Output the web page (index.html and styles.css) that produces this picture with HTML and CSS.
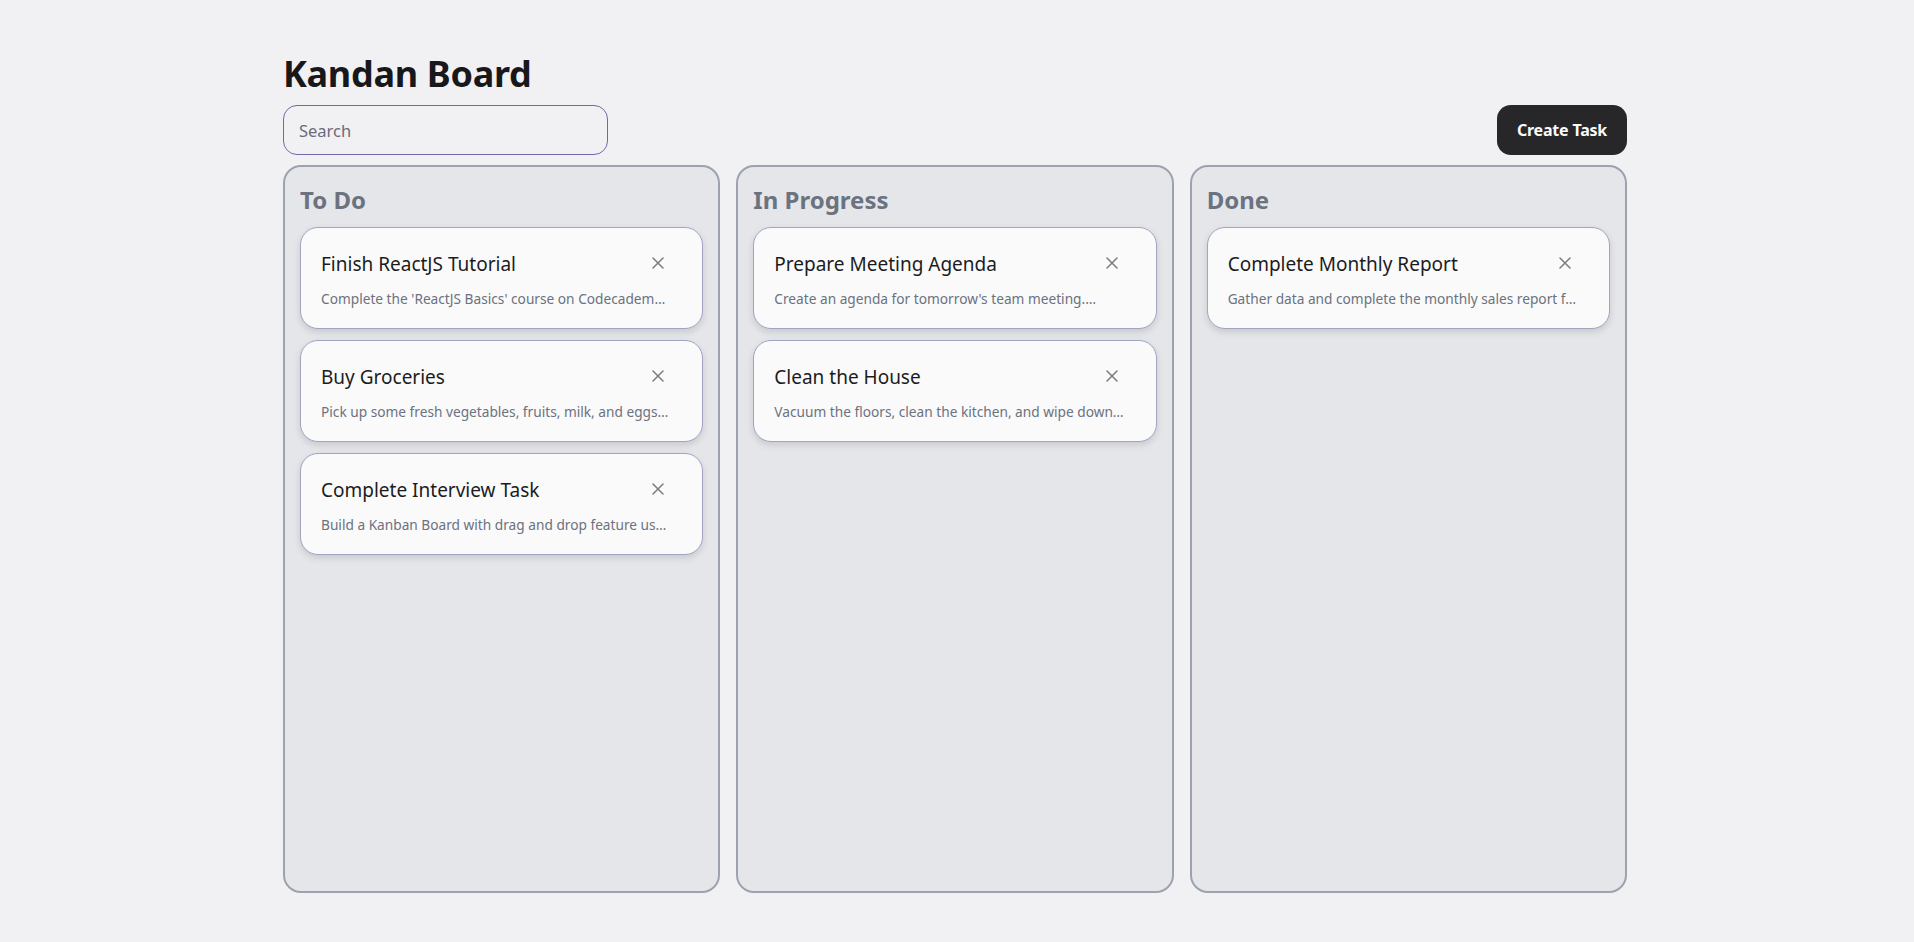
FILE: index.html
```html
<!DOCTYPE html>
<html lang="en">
<head>
<meta charset="utf-8">
<title>Kandan Board</title>
<link rel="stylesheet" href="styles.css">
</head>
<body>
<main class="page">
  <h1 class="page-title">Kandan Board</h1>
  <div class="toolbar">
    <input class="search" type="text" placeholder="Search">
    <button class="create-btn" type="button">Create Task</button>
  </div>
  <section class="board">
    <div class="column">
      <h2 class="column-title">To Do</h2>
      <div class="card-list">
        <article class="card">
          <div class="card-head">
            <h3 class="card-title">Finish ReactJS Tutorial</h3>
            <button class="close-btn" type="button" aria-label="Delete"><svg viewBox="0 0 12 12" width="12" height="12"><path d="M1 1L11 11M11 1L1 11" stroke="currentColor" stroke-width="1.5" stroke-linecap="round" fill="none"/></svg></button>
          </div>
          <p class="card-desc">Complete the 'ReactJS Basics' course on Codecadem…</p>
        </article>
        <article class="card">
          <div class="card-head">
            <h3 class="card-title">Buy Groceries</h3>
            <button class="close-btn" type="button" aria-label="Delete"><svg viewBox="0 0 12 12" width="12" height="12"><path d="M1 1L11 11M11 1L1 11" stroke="currentColor" stroke-width="1.5" stroke-linecap="round" fill="none"/></svg></button>
          </div>
          <p class="card-desc">Pick up some fresh vegetables, fruits, milk, and eggs…</p>
        </article>
        <article class="card">
          <div class="card-head">
            <h3 class="card-title">Complete Interview Task</h3>
            <button class="close-btn" type="button" aria-label="Delete"><svg viewBox="0 0 12 12" width="12" height="12"><path d="M1 1L11 11M11 1L1 11" stroke="currentColor" stroke-width="1.5" stroke-linecap="round" fill="none"/></svg></button>
          </div>
          <p class="card-desc">Build a Kanban Board with drag and drop feature us…</p>
        </article>
      </div>
    </div>
    <div class="column">
      <h2 class="column-title">In Progress</h2>
      <div class="card-list">
        <article class="card">
          <div class="card-head">
            <h3 class="card-title">Prepare Meeting Agenda</h3>
            <button class="close-btn" type="button" aria-label="Delete"><svg viewBox="0 0 12 12" width="12" height="12"><path d="M1 1L11 11M11 1L1 11" stroke="currentColor" stroke-width="1.5" stroke-linecap="round" fill="none"/></svg></button>
          </div>
          <p class="card-desc">Create an agenda for tomorrow's team meeting.…</p>
        </article>
        <article class="card">
          <div class="card-head">
            <h3 class="card-title">Clean the House</h3>
            <button class="close-btn" type="button" aria-label="Delete"><svg viewBox="0 0 12 12" width="12" height="12"><path d="M1 1L11 11M11 1L1 11" stroke="currentColor" stroke-width="1.5" stroke-linecap="round" fill="none"/></svg></button>
          </div>
          <p class="card-desc">Vacuum the floors, clean the kitchen, and wipe down…</p>
        </article>
      </div>
    </div>
    <div class="column">
      <h2 class="column-title">Done</h2>
      <div class="card-list">
        <article class="card">
          <div class="card-head">
            <h3 class="card-title">Complete Monthly Report</h3>
            <button class="close-btn" type="button" aria-label="Delete"><svg viewBox="0 0 12 12" width="12" height="12"><path d="M1 1L11 11M11 1L1 11" stroke="currentColor" stroke-width="1.5" stroke-linecap="round" fill="none"/></svg></button>
          </div>
          <p class="card-desc">Gather data and complete the monthly sales report f…</p>
        </article>
      </div>
    </div>
  </section>
</main>
</body>
</html>
```

FILE: styles.css
```css
* { box-sizing: border-box; }

html, body {
  margin: 0;
  padding: 0;
  background: #f1f1f3;
  font-family: "Noto Sans", "Open Sans", sans-serif;
  color: #1c1c1e;
}

.page {
  width: 1344px;
  margin-left: calc(50% - 674px);
  padding-top: 50px;
}

.page-title {
  margin: 0;
  font-size: 36px;
  line-height: 48px;
  font-weight: 700;
  color: #18181b;
  letter-spacing: -0.3px;
}

.toolbar {
  margin-top: 7px;
  display: flex;
  justify-content: space-between;
  align-items: center;
}

.search {
  width: 325px;
  height: 50px;
  border: 1px solid #6e6aa6;
  border-radius: 14px;
  background: #f1f1f3;
  padding: 0 15px;
  font-family: inherit;
  font-size: 16.5px;
  color: #333;
  outline: none;
}

.search::placeholder {
  color: #6b6b78;
}

.create-btn {
  height: 50px;
  width: 130px;
  border: none;
  border-radius: 14px;
  background: #27272a;
  color: #fafafa;
  font-family: inherit;
  font-size: 16px;
  font-weight: 700;
  padding: 0;
  letter-spacing: -0.2px;
}

.board {
  margin-top: 10px;
  display: grid;
  grid-template-columns: repeat(3, minmax(0, 1fr));
  gap: 16px;
}

.column {
  min-width: 0;
  height: 728px;
  background: #e5e6ea;
  border: 2px solid #9ca3af;
  border-radius: 18px;
  padding: 17px 15px 16px;
}

.column-title {
  margin: 0 0 11px;
  font-size: 24px;
  line-height: 32px;
  font-weight: 700;
  color: #6b7280;
}

.card-list {
  display: flex;
  flex-direction: column;
  gap: 11px;
}

.card {
  min-width: 0;
  background: #fafafa;
  border: 1px solid #a3a3c6;
  border-radius: 18px;
  padding: 22px 19px 19px 20px;
  box-shadow: 0 3px 7px rgba(0, 0, 0, 0.13);
}

.card-head {
  display: flex;
  align-items: center;
  justify-content: space-between;
  height: 28px;
  padding-right: 19px;
}

.card-title {
  margin: 0;
  font-size: 19px;
  line-height: 28px;
  font-weight: 400;
  color: #1c1c1e;
}

.close-btn {
  border: none;
  background: none;
  padding: 0;
  width: 12px;
  height: 12px;
  color: #7b7b80;
  display: flex;
  flex: none;
  margin-top: -2px;
}

.card-desc {
  margin: 11px 0 0;
  font-size: 13.7px;
  line-height: 20px;
  color: #6b7280;
  white-space: nowrap;
  overflow: hidden;
  text-overflow: ellipsis;
}
```
